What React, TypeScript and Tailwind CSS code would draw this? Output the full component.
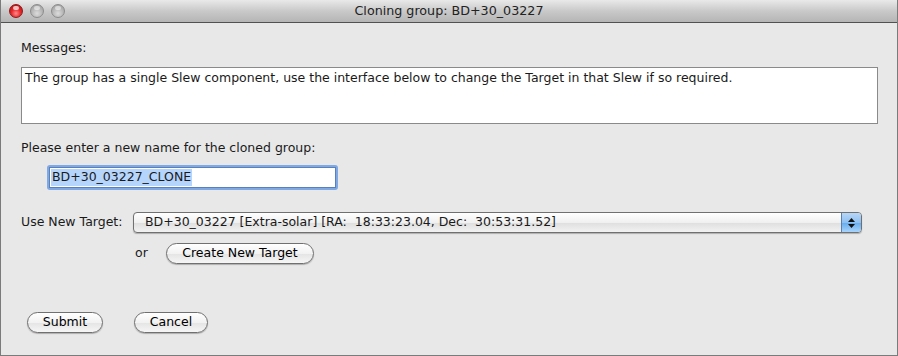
const font = { fontFamily: '"DejaVu Sans", "Liberation Sans", sans-serif' };

function Light({ red }: { red?: boolean }) {
  return red ? (
    <div className="w-[14px] h-[14px] rounded-full border border-[#8a1a1a] bg-[radial-gradient(circle_at_50%_70%,#ff8a8a_0%,#e8282a_45%,#a80c0e_100%)] relative">
      <div className="absolute left-[3px] top-[1px] w-[6px] h-[4px] rounded-full bg-white/70" />
    </div>
  ) : (
    <div className="w-[14px] h-[14px] rounded-full border border-[#8c8c8c] bg-[radial-gradient(circle_at_50%_70%,#dcdcdc_0%,#b4b4b4_55%,#9a9a9a_100%)] relative">
      <div className="absolute left-[3px] top-[1px] w-[6px] h-[4px] rounded-full bg-white/50" />
    </div>
  );
}

function PillButton({ label, className }: { label: string; className: string }) {
  return (
    <button
      type="button"
      className={`h-[21px] rounded-full border border-[#707070] bg-[linear-gradient(#ffffff,#f2f2f2_50%,#e4e4e4_51%,#f6f6f6)] shadow-[0_1px_1px_rgba(0,0,0,0.25)] text-[12.5px] text-black leading-none ${className}`}
    >
      {label}
    </button>
  );
}

export default function App() {
  return (
    <div className="w-[898px] h-[356px] bg-[#e8e8e8] border-x border-b border-[#7b7b7b] text-[12.5px] text-[#1a1a1a] overflow-hidden" style={font}>
      <div className="h-[23px] flex items-center relative border-b border-[#515151] bg-[linear-gradient(#e9e9e9,#c9c9c9_50%,#b5b5b5)] rounded-t-[4px]">
        <div className="flex items-center gap-[7px] pl-[8px]">
          <Light red />
          <Light />
          <Light />
        </div>
        <div className="absolute inset-0 flex items-center justify-center text-[12.7px] text-[#222]">
          Cloning group: BD+30_03227
        </div>
      </div>

      <div className="pl-[20px] pr-[20px]">
        <div className="mt-[16px] h-[17px]">Messages:</div>
        <div className="mt-[11px] w-[857px] h-[57px] bg-white border border-[#8a8a8a] px-[3px] pt-[1px]">
          The group has a single Slew component, use the interface below to change the Target in that Slew if so required.
        </div>

        <div className="mt-[15px] h-[17px]">Please enter a new name for the cloned group:</div>
        <div className="mt-[9px] ml-[26px] w-[291px] h-[25px] rounded-[3px] bg-[#7ea9e4] p-[2px]">
          <div className="w-full h-full bg-white border border-[#5b7fb8] flex items-stretch pl-[1px] py-[1px]">
            <div className="bg-[#b6d5fd] px-[1px] flex items-center">BD+30_03227_CLONE</div>
          </div>
        </div>

        <div className="mt-[22px] flex items-center">
          <span className="w-[112px]">Use New Target:</span>
          <div className="w-[729px] h-[21px] flex rounded-[4px] border border-[#707070] bg-[linear-gradient(#ffffff,#f0f0f0_50%,#e0e0e0_55%,#f2f2f2)] shadow-[0_1px_1px_rgba(0,0,0,0.25)] overflow-hidden">
            <div className="flex-1 pl-[11px] flex items-center whitespace-pre">BD+30_03227 [Extra-solar] [RA:  18:33:23.04, Dec:  30:53:31.52]</div>
            <div className="w-[20px] bg-[linear-gradient(#b8d6f6,#8ec0f2_50%,#6aaef0_55%,#a8d4fa)] border-l border-[#5a7fb5] flex flex-col items-center justify-center gap-[2px]">
              <svg width="7" height="4" viewBox="0 0 7 4"><path d="M3.5 0L7 4H0z" fill="#111" /></svg>
              <svg width="7" height="4" viewBox="0 0 7 4"><path d="M0 0H7L3.5 4z" fill="#111" /></svg>
            </div>
          </div>
        </div>

        <div className="mt-[10px] flex items-center">
          <span className="ml-[114px] w-[31px]">or</span>
          <PillButton label="Create New Target" className="w-[148px]" />
        </div>

        <div className="mt-[48px] flex items-center">
          <PillButton label="Submit" className="ml-[6px] w-[76px]" />
          <PillButton label="Cancel" className="ml-[31px] w-[74px]" />
        </div>
      </div>
    </div>
  );
}
